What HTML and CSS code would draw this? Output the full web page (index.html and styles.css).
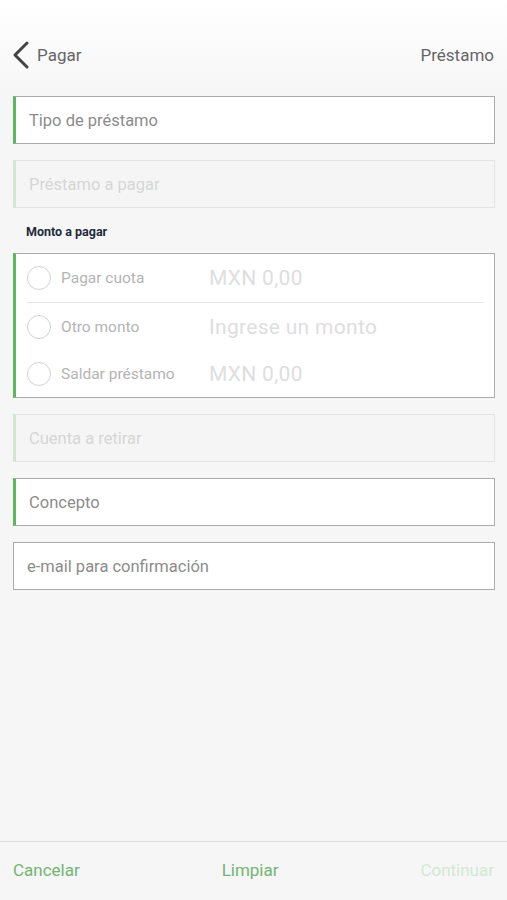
FILE: index.html
```html
<!DOCTYPE html>
<html lang="es">
<head>
    <meta charset="UTF-8">
    <meta name="viewport" content="width=device-width, initial-scale=1.0">
    <title>Pagar Préstamo</title>
    <link rel="stylesheet" href="styles.css">
</head>
<body>
    <div class="page">
        <header class="topbar">
            <a class="back" href="#">
                <svg class="chevron" width="17" height="28" viewBox="0 0 17 28">
                    <path d="M15 2 L3 14 L15 26" fill="none" stroke="#444" stroke-width="3" stroke-linecap="round" stroke-linejoin="round"/>
                </svg>
                <span>Pagar</span>
            </a>
            <span class="title">Préstamo</span>
        </header>

        <form class="form">
            <div class="field active">Tipo de préstamo</div>
            <div class="field disabled">Préstamo a pagar</div>

            <div class="section-label">Monto a pagar</div>
            <div class="amount-box">
                <div class="amount-row divided">
                    <span class="radio"></span>
                    <span class="option">Pagar cuota</span>
                    <span class="amount">MXN 0,00</span>
                </div>
                <div class="amount-row">
                    <span class="radio"></span>
                    <span class="option">Otro monto</span>
                    <span class="amount">Ingrese un monto</span>
                </div>
                <div class="amount-row">
                    <span class="radio"></span>
                    <span class="option">Saldar préstamo</span>
                    <span class="amount">MXN 0,00</span>
                </div>
            </div>

            <div class="field disabled">Cuenta a retirar</div>
            <div class="field active">Concepto</div>
            <div class="field plain">e-mail para confirmación</div>
        </form>

        <footer class="actions">
            <a href="#" class="action">Cancelar</a>
            <a href="#" class="action">Limpiar</a>
            <a href="#" class="action muted">Continuar</a>
        </footer>
    </div>
</body>
</html>
```

FILE: styles.css
```css
body {
    margin: 0;
    font-family: Roboto, "Liberation Sans", sans-serif;
    background-color: #f6f6f6;
}
.page {
    width: 507px;
    height: 900px;
    display: flex;
    flex-direction: column;
    overflow: hidden;
}
.topbar {
    display: flex;
    align-items: center;
    justify-content: space-between;
    height: 28px;
    padding: 41px 13px 27px 12px;
    background: linear-gradient(#ffffff, #f6f6f6);
}
.back {
    display: flex;
    align-items: center;
    gap: 8px;
    color: #666;
    text-decoration: none;
    font-size: 17px;
}
.chevron {
    display: block;
}
.title {
    color: #666;
    font-size: 17px;
}
.form {
    display: flex;
    flex-direction: column;
    gap: 16px;
    padding: 0 12px 0 13px;
}
.field {
    box-sizing: border-box;
    height: 48px;
    display: flex;
    align-items: center;
    padding-left: 13px;
    font-size: 16.5px;
    border: 1px solid #ababab;
    background: #fff;
    color: #8c8c8c;
}
.field.active {
    border-left: 3px solid #5cb85c;
}
.field.disabled {
    background: #f5f5f5;
    border-color: #e3e3e3;
    border-left: 3px solid #cfe8cf;
    color: #d6d6d6;
}
.section-label {
    margin: 0 0 -2px 13px;
    font-size: 12.5px;
    font-weight: bold;
    color: #1e2b3a;
}
.amount-box {
    display: flex;
    flex-direction: column;
    border: 1px solid #ababab;
    border-left: 3px solid #5cb85c;
    background: #fff;
    padding: 0 10px 0 11px;
}
.amount-row {
    display: flex;
    align-items: center;
    height: 47px;
}
.amount-row.divided {
    height: 48px;
    border-bottom: 1px solid #e6e6e6;
}
.radio {
    width: 22px;
    height: 22px;
    border: 1px solid #d2d2d2;
    border-radius: 50%;
    margin-right: 10px;
}
.option {
    width: 148px;
    font-size: 15.5px;
    color: #b4b4b4;
}
.amount {
    font-size: 21px;
    letter-spacing: 0.3px;
    color: #dedede;
}
.actions {
    margin-top: auto;
    height: 55px;
    display: flex;
    align-items: center;
    justify-content: space-between;
    padding: 0 13px 3px 13px;
    border-top: 1px solid #dedede;
}
.action {
    font-size: 17px;
    color: #72b572;
    text-decoration: none;
}
.action.muted {
    color: #d2e8d2;
}
```
